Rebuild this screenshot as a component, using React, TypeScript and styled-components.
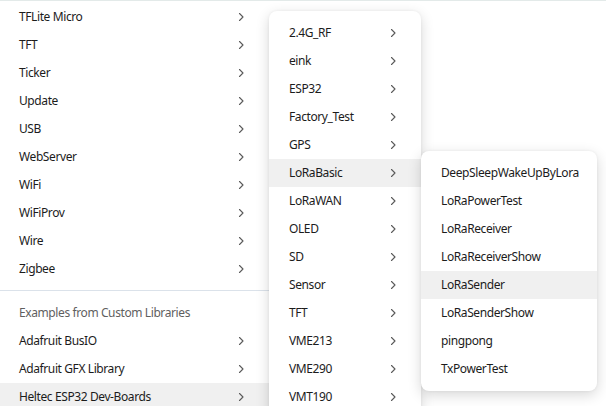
import { FC } from 'react'
import styled, { createGlobalStyle } from 'styled-components'

const GlobalStyle = createGlobalStyle`
	html, body {
		margin: 0;
		padding: 0;
		background: #ffffff;
	}
	body {
		font-family: 'Noto Sans', 'Open Sans', sans-serif;
		overflow: hidden;
	}
`

const Page = styled.div`
	position: relative;
	width: 606px;
	height: 406px;
	overflow: hidden;
	background: #ffffff;
	border-top: 1px solid #e3eae9;
	box-sizing: border-box;
`

const Menu = styled.div<{ $left: number; $top: number; $width: number; $floating?: boolean }>`
	position: absolute;
	left: ${({ $left }) => $left}px;
	top: ${({ $top }) => $top}px;
	width: ${({ $width }) => $width}px;
	display: flex;
	flex-direction: column;
	padding: ${({ $floating }) => ($floating ? '8px 0' : '2px 0 0')};
	background: #ffffff;
	border-radius: ${({ $floating }) => ($floating ? '8px' : '0')};
	box-shadow: ${({ $floating }) =>
		$floating ? '0 4px 14px rgba(0, 0, 0, 0.16), 0 0 3px rgba(0, 0, 0, 0.06)' : 'none'};
	box-sizing: border-box;
`

const Row = styled.div<{ $active?: boolean; $pad: number }>`
	display: flex;
	align-items: center;
	justify-content: space-between;
	height: 28px;
	padding: 0 24px 0 ${({ $pad }) => $pad}px;
	background: ${({ $active }) => ($active ? '#f0f0f0' : 'transparent')};
	color: #1c1c1c;
	font-size: 12px;
	letter-spacing: -0.4px;
	white-space: nowrap;
`

const Label = styled.span`
	line-height: 28px;
`

const Separator = styled.div`
	height: 1px;
	margin: 7px 0 8px;
	background: #dbe2ea;
`

const SectionTitle = styled(Row)`
	color: #5f5f5f;
`

const Chevron: FC = () => (
	<svg width="8" height="10" viewBox="0 0 8 10" fill="none">
		<path d="M2.5 1.5 L6 5 L2.5 8.5" stroke="#5a5a5a" strokeWidth="1.1" strokeLinecap="round" strokeLinejoin="round" />
	</svg>
)

type Item = { label: string; sub?: boolean; active?: boolean }

const rootItems: Item[] = [
	{ label: 'TFLite Micro', sub: true },
	{ label: 'TFT', sub: true },
	{ label: 'Ticker', sub: true },
	{ label: 'Update', sub: true },
	{ label: 'USB', sub: true },
	{ label: 'WebServer', sub: true },
	{ label: 'WiFi', sub: true },
	{ label: 'WiFiProv', sub: true },
	{ label: 'Wire', sub: true },
	{ label: 'Zigbee', sub: true },
]

const customItems: Item[] = [
	{ label: 'Adafruit BusIO', sub: true },
	{ label: 'Adafruit GFX Library', sub: true },
	{ label: 'Heltec ESP32 Dev-Boards', sub: true, active: true },
]

const boardItems: Item[] = [
	{ label: '2.4G_RF', sub: true },
	{ label: 'eink', sub: true },
	{ label: 'ESP32', sub: true },
	{ label: 'Factory_Test', sub: true },
	{ label: 'GPS', sub: true },
	{ label: 'LoRaBasic', sub: true, active: true },
	{ label: 'LoRaWAN', sub: true },
	{ label: 'OLED', sub: true },
	{ label: 'SD', sub: true },
	{ label: 'Sensor', sub: true },
	{ label: 'TFT', sub: true },
	{ label: 'VME213', sub: true },
	{ label: 'VME290', sub: true },
	{ label: 'VMT190', sub: true },
]

const loraItems: Item[] = [
	{ label: 'DeepSleepWakeUpByLora' },
	{ label: 'LoRaPowerTest' },
	{ label: 'LoRaReceiver' },
	{ label: 'LoRaReceiverShow' },
	{ label: 'LoRaSender', active: true },
	{ label: 'LoRaSenderShow' },
	{ label: 'pingpong' },
	{ label: 'TxPowerTest' },
]

const MenuRows: FC<{ items: Item[]; pad: number }> = ({ items, pad }) => (
	<>
		{items.map((item) => (
			<Row key={item.label} $active={item.active} $pad={pad}>
				<Label>{item.label}</Label>
				{item.sub && <Chevron />}
			</Row>
		))}
	</>
)

export default function App() {
	return (
		<>
			<GlobalStyle />
			<Page>
				<Menu $left={0} $top={0} $width={269}>
					<MenuRows items={rootItems} pad={19} />
					<Separator />
					<SectionTitle $pad={19}>
						<Label>Examples from Custom Libraries</Label>
					</SectionTitle>
					<MenuRows items={customItems} pad={19} />
				</Menu>
				<Menu $left={269} $top={10} $width={152} $floating>
					<MenuRows items={boardItems} pad={20} />
				</Menu>
				<Menu $left={421} $top={150} $width={176} $floating>
					<MenuRows items={loraItems} pad={20} />
				</Menu>
			</Page>
		</>
	)
}
